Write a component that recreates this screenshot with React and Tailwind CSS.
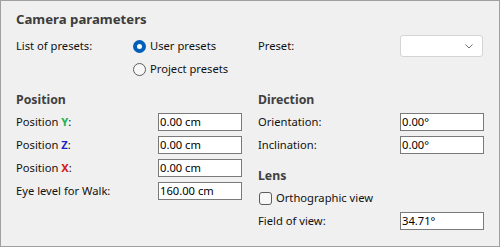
import React from 'react';

const font = { fontFamily: '"Segoe UI", "Noto Sans", sans-serif' };

const Radio = ({ checked, label, className = '' }) => (
    <div className={`flex items-center gap-[4px] ${className}`}>
        {checked ? (
            <div className="w-[13px] h-[13px] rounded-full bg-[#005fb8] flex items-center justify-center shrink-0">
                <div className="w-[5px] h-[5px] rounded-full bg-white" />
            </div>
        ) : (
            <div className="w-[13px] h-[13px] rounded-full border border-[#5c5c5c] bg-[#f7f7f7] shrink-0" />
        )}
        <span>{label}</span>
    </div>
);

const Field = ({ label, value }) => (
    <div className="flex items-center h-[18px]">
        <div className="w-[142px] shrink-0">{label}</div>
        <div className="w-[84px] h-[18px] border border-[#7a7a7a] bg-white pl-[1px] flex items-center leading-none text-black">
            {value}
        </div>
    </div>
);

const Axis = ({ letter, color }) => (
    <span>
        Position <span className={`font-bold ${color}`}>{letter}</span>:
    </span>
);

export default function App() {
    return (
        <div
            className="w-[500px] h-[247px] border border-[#a0a0a0] bg-[#f0f0f0] text-[11.2px] text-[#111] px-[15px] pt-[9px] overflow-hidden"
            style={font}
        >
            {/* Header */}
            <div className="h-[18px] leading-[18px] text-[13.2px] font-bold text-[#3c3c3c]">Camera parameters</div>

            {/* Presets */}
            <div className="flex mt-[7px]">
                <div className="flex w-[242px]">
                    <div className="w-[117px] h-[22px] flex items-center">List of presets:</div>
                    <div>
                        <Radio checked label="User presets" className="h-[22px]" />
                        <Radio label="Project presets" className="h-[18px] mt-[3px]" />
                    </div>
                </div>
                <div className="flex h-[22px]">
                    <div className="w-[142px] flex items-center">Preset:</div>
                    <div className="w-[83px] h-[22px] bg-white border border-[#d4d4d4] rounded-[3px] flex items-center justify-end pr-[9px]">
                        <svg width="8" height="5" viewBox="0 0 8 5" fill="none">
                            <path d="M0.5 0.5 L4 4 L7.5 0.5" stroke="#707070" strokeWidth="1" />
                        </svg>
                    </div>
                </div>
            </div>

            <div className="flex mt-[13px]">
                {/* Position */}
                <div className="w-[242px] flex flex-col">
                    <div className="h-[18px] leading-[18px] text-[12.3px] font-bold text-[#404040]">Position</div>
                    <div className="flex flex-col gap-[5px] mt-[4px]">
                        <Field label={<Axis letter="Y" color="text-[#22b14c]" />} value="0.00 cm" />
                        <Field label={<Axis letter="Z" color="text-[#1f1fc8]" />} value="0.00 cm" />
                        <Field label={<Axis letter="X" color="text-[#d41c1c]" />} value="0.00 cm" />
                        <Field label="Eye level for Walk:" value="160.00 cm" />
                    </div>
                </div>

                {/* Direction and lens */}
                <div className="flex flex-col">
                    <div className="h-[18px] leading-[18px] text-[12.3px] font-bold text-[#404040]">Direction</div>
                    <div className="flex flex-col gap-[5px] mt-[4px]">
                        <Field label="Orientation:" value="0.00°" />
                        <Field label="Inclination:" value="0.00°" />
                    </div>
                    <div className="h-[18px] leading-[18px] text-[12.3px] font-bold text-[#404040] mt-[13px]">Lens</div>
                    <div className="flex items-center gap-[4px] h-[18px] mt-[4px] pl-[1px]">
                        <div className="w-[13px] h-[13px] rounded-[3px] border border-[#5c5c5c] bg-[#f7f7f7]" />
                        <span>Orthographic view</span>
                    </div>
                    <div className="mt-[5px]">
                        <Field label="Field of view:" value="34.71°" />
                    </div>
                </div>
            </div>
        </div>
    );
}
